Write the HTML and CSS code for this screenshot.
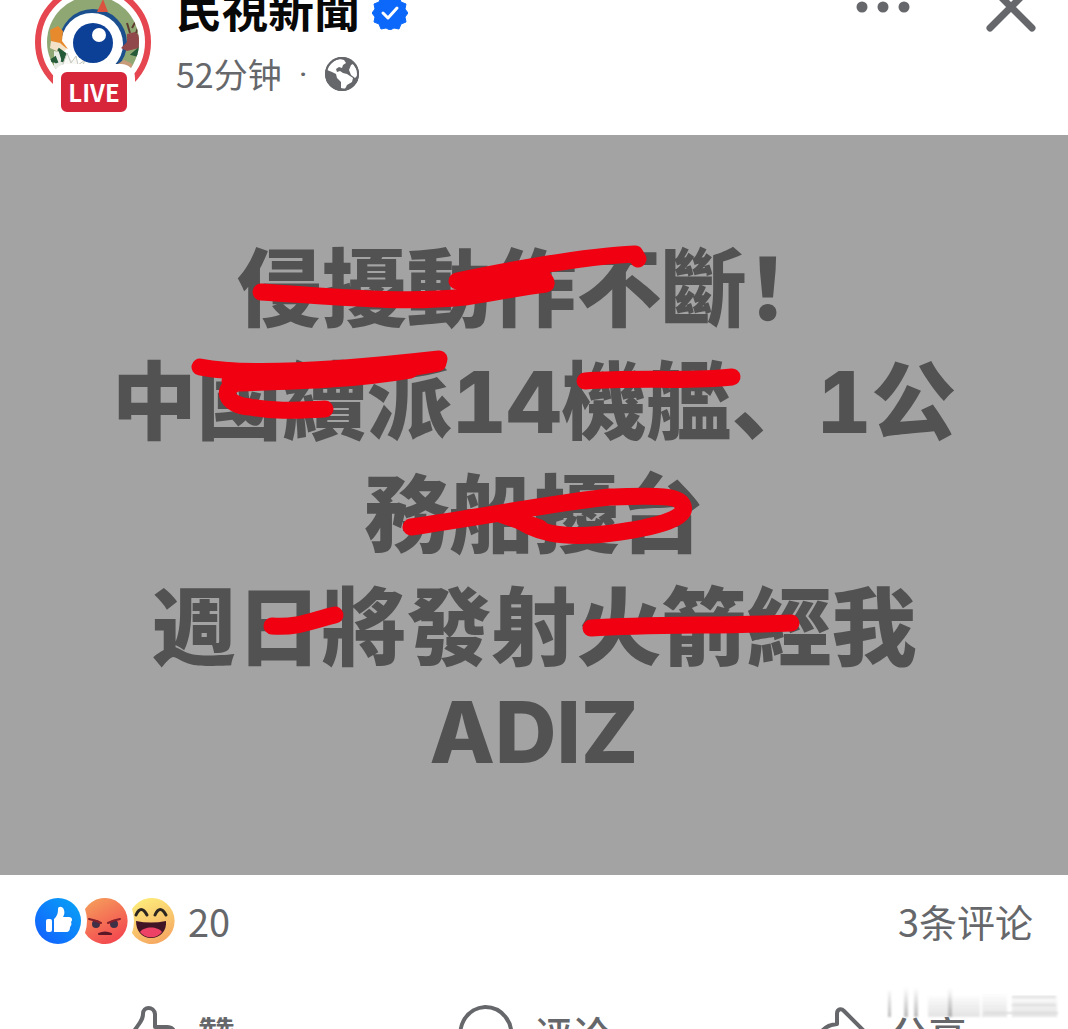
FILE: index.html
```html
<!DOCTYPE html>
<html lang="zh-CN">
<head>
<meta charset="UTF-8">
<meta name="viewport" content="width=device-width, initial-scale=1">
<title>民視新聞</title>
<link rel="stylesheet" href="styles.css">
</head>
<body>
<article class="post">
    <header class="post-header">
        <a class="avatar" href="#" aria-label="民視新聞">
            <svg viewBox="0 0 118 118" aria-hidden="true">
                <defs>
                    <clipPath id="face"><circle cx="59" cy="58" r="46"/></clipPath>
                </defs>
                <circle cx="59" cy="58" r="55" fill="#fff" stroke="#e5464f" stroke-width="6"/>
                <g clip-path="url(#face)">
                    <rect width="118" height="118" fill="#8fa873"/>
                    <circle cx="59" cy="59" r="34" fill="#1b4f8d"/>
                    <circle cx="58" cy="60" r="31" fill="#fff"/>
                    <path d="M63 28l6-13 5 13z" fill="#d9533f"/>
                    <path d="M16 46l8-4 5 5-1 10 6 8-9-4-8-2z" fill="#e78a2e"/>
                    <path d="M17 57l9 2 7 6-6 4-11-5z" fill="#f3e2c8"/>
                    <path d="M93 50l8-2 5 4-1 12-12 3-6-3 6-6z" fill="#91484a"/>
                    <path d="M96 49l-3-10M98 44l5-9M102 49l3-8" stroke="#5f3c31" stroke-width="2"/>
                    <path d="M20 67l10 2 8 8 8 9H20z" fill="#e9ece5"/>
                    <path d="M24 65l7 5-3 8M15 78l6-4 2 5M99 70l6-5 1 7z" stroke="#255b38" stroke-width="3" fill="#255b38"/>
                    <path d="M82 81l8-5 7 3 4 7H80z" fill="#c79a78"/>
                    <path d="M28 83l5-14 4 10 5-7 2 9 7-5-4 10z" fill="#f8f8f5" stroke="#c5c8be"/>
                </g>
                <circle cx="59" cy="59" r="20" fill="#0b4096"/>
                <circle cx="65" cy="51" r="7" fill="#fff"/>
            </svg>
            <span class="live">LIVE</span>
        </a>
        <div class="author">
            <div class="author-line">
                <a class="name" href="#">民視新聞</a>
                <svg class="verified" viewBox="0 0 36 36" aria-hidden="true">
                    <path d="M18 1l4 3 5-1 2 5 5 2-1 5 3 4-3 4 1 5-5 2-2 5-5-1-4 2-4-2-5 1-2-5-5-2 1-5-3-4 3-4-1-5 5-2 2-5 5 1z" fill="#0b68fb" stroke="#0b68fb" stroke-width="1" stroke-linejoin="round"/>
                    <path d="M11 19l5 5 9-10" fill="none" stroke="#fff" stroke-width="3" stroke-linecap="round" stroke-linejoin="round"/>
                </svg>
            </div>
            <div class="meta">
                <span>52分钟</span>
                <span class="dot">·</span>
                <svg class="globe" viewBox="0 0 34 34" aria-hidden="true">
                    <circle cx="17" cy="17" r="17" fill="#65676b"/>
                    <path d="M2 13C4 7 9 3 15 2l4 1 2 3-3 2-1 3-3-1-3 2 1 3 3-1 3 2 4 1 6 4-1 4-5 3-2 4-4-1v-6l-4-4-1-4-4-2z" fill="#fff"/>
                    <path d="M26 8l2-1 4 6 1 5-3 3-4-3-2-5z" fill="#fff"/>
                    <circle cx="17" cy="17" r="16" fill="none" stroke="#65676b" stroke-width="2"/>
                </svg>
            </div>
        </div>
        <div class="tools">
            <button type="button" aria-label="更多">
                <svg class="more" viewBox="0 0 54 54" aria-hidden="true">
                    <circle cx="6" cy="27" r="5.5"/><circle cx="27" cy="27" r="5.5"/><circle cx="48" cy="27" r="5.5"/>
                </svg>
            </button>
            <button type="button" aria-label="关闭">
                <svg class="close" viewBox="0 0 54 54" aria-hidden="true">
                    <path d="M6 6l42 42M48 6L6 48"/>
                </svg>
            </button>
        </div>
    </header>

    <div class="canvas">
        <p class="headline">侵擾動作不斷！<br>中國續派14機艦、1公<br>務船擾台<br>週日將發射火箭經我<span class="last">ADIZ</span></p>
        <!-- marker strokes over the headline -->
        <svg class="marks" viewBox="0 0 1068 740" aria-hidden="true">
            <path d="M261 157C330 161 400 169 465 162C500 157 520 152 546 149"/>
            <path d="M457 146C520 133 590 121 635 119L638 124"/>
            <path d="M462 148L540 138L546 147L480 154"/>
            <path d="M200 232C250 242 350 234 439 224"/>
            <path d="M230 246C290 244 370 242 438 228"/>
            <path d="M240 248C300 246 350 245 410 235"/>
            <path d="M240 247C220 252 224 270 250 272C275 277 300 275 325 274"/>
            <path d="M585 246C640 242 690 247 732 242"/>
            <path d="M411 392C480 382 560 367 610 362C650 361 680 359 683 371C687 383 660 391 620 397C560 406 530 397 510 378"/>
            <path d="M500 379L540 393"/>
            <path d="M272 491C300 493 315 484 335 480"/>
            <path d="M591 493C650 489 720 491 791 488"/>
        </svg>
    </div>

    <div class="stats">
        <a class="reactions" href="#">
            <svg viewBox="0 0 46 46" aria-hidden="true">
                <defs>
                    <linearGradient id="blue" x1="1" y1="0" x2="0" y2="1"><stop offset="0" stop-color="#08a6f5"/><stop offset="1" stop-color="#135bff"/></linearGradient>
                </defs>
                <circle cx="23" cy="23" r="23" fill="url(#blue)"/>
                <rect x="11" y="21" width="6" height="13" rx="2" fill="#fff"/>
                <path d="M19 21c3-3 4-5 4-10 0-3 5-3 6 1 1 3 0 5-1 7h6c3 0 4 3 2 5 1 2 0 4-1 5 0 3-1 5-4 5H19z" fill="#fff"/>
            </svg>
            <svg viewBox="0 0 46 46" aria-hidden="true">
                <defs>
                    <linearGradient id="red" x1=".3" y1="0" x2=".8" y2="1"><stop offset="0" stop-color="#f5985b"/><stop offset="1" stop-color="#f3414e"/></linearGradient>
                </defs>
                <path d="M3 11A23 23 0 1 1 3 35Q7 23 3 11z" fill="url(#red)"/>
                <circle cx="14" cy="26" r="4" fill="#3e3047"/><circle cx="32" cy="26" r="4" fill="#3e3047"/>
                <path d="M7 21q6 1 12 4M38 21q-6 1-12 4" fill="none" stroke="#821f2b" stroke-width="2" stroke-linecap="round"/>
                <path d="M17 36q6-3 12 0z" fill="#5b1725" stroke="#5b1725" stroke-width="2" stroke-linejoin="round"/>
            </svg>
            <svg viewBox="0 0 46 46" aria-hidden="true">
                <defs>
                    <linearGradient id="yellow" x1=".4" y1="0" x2=".8" y2="1"><stop offset="0" stop-color="#fde879"/><stop offset="1" stop-color="#f5a360"/></linearGradient>
                </defs>
                <path d="M3 11A23 23 0 1 1 3 35Q7 23 3 11z" fill="url(#yellow)"/>
                <path d="M7 17q5-11 11 0M26 17q5-11 11 0" fill="none" stroke="#2d2520" stroke-width="3" stroke-linecap="round"/>
                <path d="M7 23q15 3 30 0c1 10-6 17-15 17S7 33 7 23z" fill="#421526"/>
                <path d="M11 34c4-6 18-6 22 0-5 7-17 7-22 0z" fill="#ed4265"/>
            </svg>
            <span>20</span>
        </a>
        <a class="comments" href="#">3条评论</a>
    </div>

    <div class="actions">
        <button type="button">
            <svg viewBox="0 0 56 56" aria-hidden="true">
                <path d="M2 26h12c5-7 9-11 9-17 0-8 11-8 12 0v13h12c5 0 8 3 7 8-1 10-5 23-11 23H2z"/>
            </svg>
            <span>赞</span>
        </button>
        <button type="button">
            <svg viewBox="0 0 56 56" aria-hidden="true">
                <path d="M28 2a26 26 0 1 1-12 49L3 54l4-13A26 26 0 0 1 28 2z"/>
            </svg>
            <span>评论</span>
        </button>
        <button type="button">
            <svg viewBox="0 0 56 56" aria-hidden="true">
                <path d="M24 9c0-5 4-6 7-3l21 21c2 2 2 4 0 6L32 52c-3 3-7 2-7-2V39C15 39 9 43 4 49 0 32 10 20 24 19z"/>
            </svg>
            <span>分享</span>
        </button>
    </div>

    <svg class="smudge" viewBox="0 0 184 36" aria-hidden="true">
        <defs>
            <linearGradient id="fade" x1="0" y1="0" x2="0" y2="1"><stop offset="0" stop-color="#777" stop-opacity="0"/><stop offset="1" stop-color="#777" stop-opacity=".5"/></linearGradient>
            <filter id="soft"><feGaussianBlur stdDeviation="1"/></filter>
        </defs>
        <rect x="2" y="1" width="172" height="31" fill="#fff"/>
        <g filter="url(#soft)" fill="url(#fade)">
            <path d="M4 6h3v26H4zM20 2h4v30h-4zM30 4h4v28h-4zM64 4h4v28h-4z"/>
            <path d="M44 12h52v20H44zM98 8h25v24H98zM128 12h45v20h-45z" opacity=".4"/>
        </g>
        <path d="M128 12h44M128 20h44M100 28h74" stroke="#ddd" stroke-width="2" filter="url(#soft)"/>
    </svg>
</article>
</body>
</html>
```

FILE: styles.css
```css
* {
    box-sizing: border-box;
}
body {
    margin: 0;
    height: 100vh;
    overflow: hidden;
    background: #fff;
    color: #65676b;
    font-family: "Noto Sans CJK SC", sans-serif;
}
a {
    color: inherit;
    text-decoration: none;
}
button {
    padding: 0;
    border: none;
    background: none;
    color: inherit;
    font: inherit;
    cursor: pointer;
}
svg {
    display: block;
    flex: none;
}
.post {
    position: relative;
    height: 100%;
    overflow: hidden;
}

/* Header, scrolled partly out of view */
.post-header {
    display: flex;
    gap: 24px;
    margin-top: -20px;
    padding: 0 30px 23px 34px;
}
.avatar {
    position: relative;
    width: 118px;
    height: 132px;
    padding-top: 4px;
}
.avatar svg {
    width: 118px;
    height: 118px;
}
.live {
    position: absolute;
    left: 19px;
    bottom: -8px;
    width: 82px;
    border: 8px solid #fff;
    border-radius: 14px;
    background: #d7263a;
    color: #fff;
    font: bold 24px/40px "Noto Sans CJK SC", sans-serif;
    text-align: center;
}
.author {
    flex: 1;
}
.author-line {
    display: flex;
    align-items: center;
    gap: 12px;
    height: 64px;
}
.name {
    padding-bottom: 10px;
    color: #080809;
    font-size: 46px;
    font-weight: 700;
    line-height: 54px;
}
.verified {
    width: 36px;
    height: 36px;
}
.meta {
    display: flex;
    align-items: center;
    gap: 17px;
    margin-top: 10px;
    font-size: 34px;
    line-height: 40px;
}
.dot {
    font-family: Roboto, sans-serif;
}
.globe {
    width: 34px;
    height: 34px;
}
.tools {
    display: flex;
    align-items: flex-start;
    gap: 74px;
}
.tools svg {
    width: 54px;
    height: 54px;
}
.more {
    fill: #65676b;
}
.close {
    fill: none;
    stroke: #65676b;
    stroke-width: 7;
    stroke-linecap: round;
}

/* Text card */
.canvas {
    position: relative;
    padding: 98px 0 95px;
    background: #a3a3a3;
}
.headline {
    margin: 0;
    color: #525252;
    font-family: Inter, "Noto Sans CJK SC", sans-serif;
    font-size: 85px;
    font-weight: 800;
    font-variant-numeric: tabular-nums;
    line-height: 113px;
    text-align: center;
    white-space: nowrap;
}
.last {
    display: block;
    line-height: 95px;
}
.marks {
    position: absolute;
    inset: 0;
    width: 100%;
    height: 100%;
    fill: none;
    stroke: #f00011;
    stroke-width: 17;
    stroke-linecap: round;
    stroke-linejoin: round;
}

/* Reactions and comment count */
.stats {
    display: flex;
    justify-content: space-between;
    align-items: center;
    padding: 18px 35px;
    font-size: 38px;
    line-height: 56px;
}
.reactions {
    display: flex;
    align-items: center;
    gap: 1px;
}
.reactions svg {
    width: 46px;
    height: 46px;
}
.reactions span {
    margin-left: 12px;
}

.actions {
    display: grid;
    grid-template-columns: repeat(3, 1fr);
    margin-top: 36px;
}
.actions button {
    display: flex;
    justify-content: center;
    align-items: center;
    gap: 21px;
    font-size: 38px;
    font-weight: 500;
    line-height: 60px;
}
.actions svg {
    width: 56px;
    height: 56px;
    fill: none;
    stroke: #65676b;
    stroke-width: 4;
    stroke-linejoin: round;
}
.smudge {
    position: absolute;
    right: 0;
    bottom: 8px;
    width: 184px;
    height: 36px;
}
```
